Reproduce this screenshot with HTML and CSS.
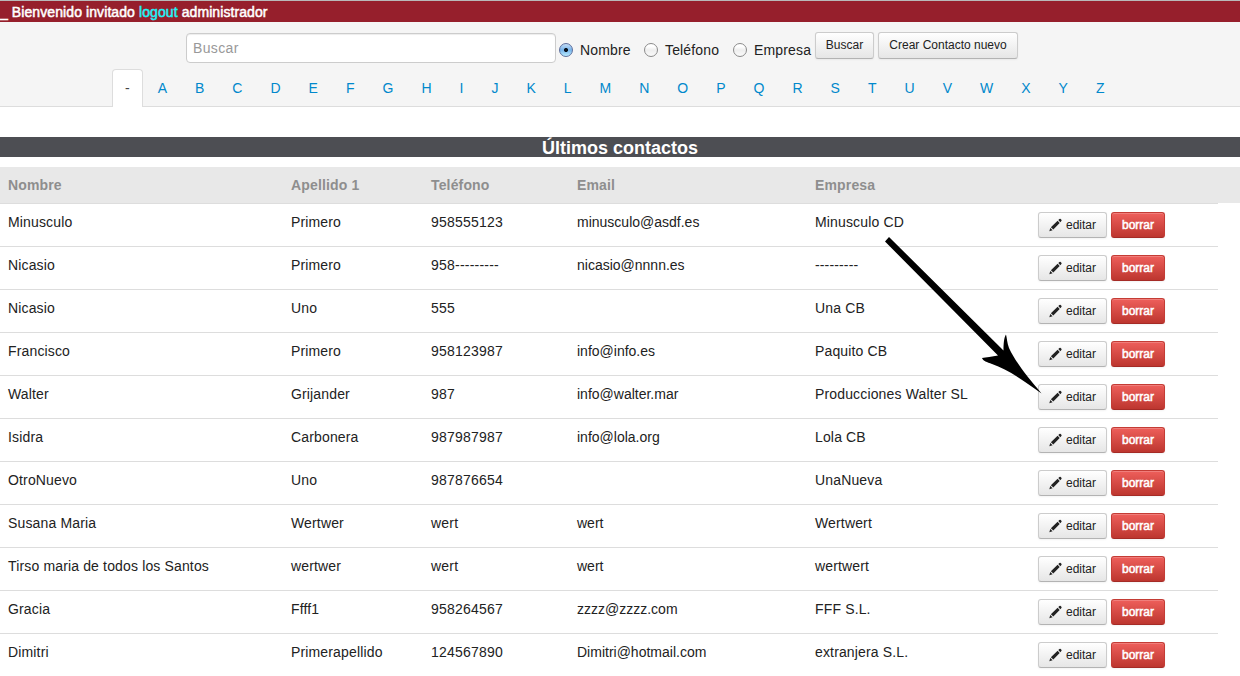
FILE: index.html
```html
<!DOCTYPE html>
<html lang="es">
<head>
<meta charset="utf-8">
<title>Contactos</title>
<link rel="stylesheet" href="styles.css">
</head>
<body>
<div class="userbar">_ Bienvenido invitado <a class="logout">logout</a> administrador</div>
<header class="header">
  <form class="search">
    <input class="search-input" type="text" placeholder="Buscar">
    <label class="option option-name"><span class="radio radio-on"></span><span>Nombre</span></label>
    <label class="option option-phone"><span class="radio"></span><span>Teléfono</span></label>
    <label class="option option-company"><span class="radio"></span><span>Empresa</span></label>
    <a class="btn btn-search">Buscar</a>
    <a class="btn btn-create">Crear Contacto nuevo</a>
  </form>
  <nav class="tabs" id="tabs"><a class="tab tab-active">-</a></nav>
</header>
<h4 class="title"><span>Últimos contactos</span></h4>
<main class="list">
  <table class="contacts">
    <colgroup><col class="c-name"><col class="c-last"><col class="c-phone"><col class="c-email"><col class="c-company"><col class="c-actions"></colgroup>
    <thead><tr><th>Nombre</th><th>Apellido 1</th><th>Teléfono</th><th>Email</th><th>Empresa</th><th></th></tr></thead>
    <tbody id="rows"></tbody>
  </table>
</main>
<svg class="arrow" width="160" height="160" viewBox="0 0 160 160">
  <path d="M9 0 L5 4.500 L118 118.500 C112 119.500 106 120.500 102 121 C103 124 107 125 112 127 C127 132 143 143 161.500 156.500 C147 139 136 126 129 111 C127 106 127 101 126 97.500 C124 100 123.500 107 123.500 113.500 Z"/>
</svg>
<script src="app.js"></script>
</body>
</html>
```
FILE: styles.css
```css
body {
  margin: 0;
  height: 676px;
  overflow: hidden;
  position: relative;
  background: #fff;
  color: #222;
  font: 14px/20px "Liberation Sans", Arial, sans-serif;
}

.userbar {
  height: 20px;
  box-sizing: content-box;
  border-top: 1px solid #b9b9b9;
  padding-top: 1px;
  background: #961f2c;
  color: #fff;
  line-height: 21px;
  letter-spacing: .09px;
  -webkit-text-stroke: 0.5px;
}
.logout { color: #1ff4f8; }

.header {
  height: 84px;
  background: #f5f5f5;
  border-bottom: 1px solid #ddd;
}
.search {
  display: flex;
  align-items: flex-start;
  height: 47px;
  padding-left: 186px;
}
.search-input {
  box-sizing: border-box;
  width: 370px;
  height: 30px;
  margin: 11px 3px 0 0;
  padding: 4px 6px;
  border: 1px solid #ccc;
  border-radius: 4px;
  background: #fff;
  box-shadow: inset 0 1px 1px rgba(0, 0, 0, .075);
  font: inherit;
  letter-spacing: .35px;
}
.search-input::placeholder { color: #999; opacity: 1; }
.option {
  display: flex;
  align-items: center;
  gap: 7px;
  margin-top: 18px;
  white-space: nowrap;
  letter-spacing: .15px;
}
.option-name { width: 85px; }
.option-phone { width: 89px; }
.option-company { width: 82px; }
.radio {
  flex: none;
  box-sizing: border-box;
  width: 14px;
  height: 14px;
  border: 1px solid #8b8b8b;
  border-radius: 50%;
  background: linear-gradient(#fff 20%, #eee 50%, #fafafa);
}
.radio-on {
  border-color: #5d6f9d;
  background: radial-gradient(circle at 50% 50%, #08111d 1.6px, transparent 2.4px), linear-gradient(#c4dcf5, #76b3ea 50%, #b8ecff);
}

.btn {
  box-sizing: border-box;
  display: flex;
  align-items: center;
  justify-content: center;
  height: 27px;
  border: 1px solid #ccc;
  border-bottom-color: #b3b3b3;
  border-radius: 3px;
  background: linear-gradient(#fff, #e6e6e6);
  box-shadow: inset 0 1px 0 rgba(255, 255, 255, .2), 0 1px 2px rgba(0, 0, 0, .05);
  color: #222;
  font-size: 12px;
  white-space: nowrap;
}
.search .btn { margin-top: 10px; padding-bottom: 1px; }
.btn-search { width: 59px; margin-right: 4px; }
.btn-create { width: 140px; }

.tabs {
  display: flex;
  gap: 2px;
  padding-left: 112px;
}
.tab {
  height: 20px;
  padding: 8px 12px;
  border: 1px solid transparent;
  border-bottom: 0;
  border-radius: 4px 4px 0 0;
  color: #08c;
}
.tab-active {
  padding-bottom: 9px;
  border-color: #ddd;
  background: #fff;
  color: #444;
}

.title {
  height: 20px;
  margin: 30px 0 10px;
  background: #4d4e53;
  color: #fff;
  font-size: 18px;
  line-height: 22px;
  text-align: center;
  letter-spacing: 0;
}

.list { background: linear-gradient(#e8e8e8, #e8e8e8) 0 0 / 100% 36px no-repeat; }
.contacts {
  width: 1218px;
  table-layout: fixed;
  border-collapse: separate;
  border-spacing: 0;
}
.c-name { width: 283px; }
.c-last { width: 140px; }
.c-phone { width: 146px; }
.c-email { width: 238px; }
.c-company { width: 223px; }
.contacts th {
  height: 20px;
  padding: 8px;
  color: #8e8e8e;
  text-align: left;
  letter-spacing: .15px;
}
.contacts td {
  height: 26px;
  padding: 8px;
  border-top: 1px solid #ddd;
  vertical-align: top;
  white-space: nowrap;
  letter-spacing: .15px;
}
.contacts td:nth-child(3) { letter-spacing: .22px; }
.contacts td:nth-child(4) { letter-spacing: 0; }
.actions { display: flex; gap: 4px; height: 26px; letter-spacing: 0; }
.actions .btn { height: 26px; padding-bottom: 1px; }
.btn-edit { width: 69px; gap: 4px; }
.btn-delete {
  width: 54px;
  border-color: #c43c35 #c43c35 #a52b26;
  background: linear-gradient(#ee5f5b, #bd362f);
  color: #fff;
  -webkit-text-stroke: .5px;
}
.pencil { width: 13px; height: 14px; fill: #222; }

.arrow {
  position: absolute;
  left: 880px;
  top: 237px;
  overflow: visible;
}
```
FILE: app.js
```js
const tabs = document.getElementById('tabs');
for (const letter of 'ABCDEFGHIJKLMNOPQRSTUVWXYZ') {
  const a = document.createElement('a');
  a.className = 'tab';
  a.textContent = letter;
  tabs.append(a);
}

const contacts = [
  ['Minusculo', 'Primero', '958555123', 'minusculo@asdf.es', 'Minusculo CD'],
  ['Nicasio', 'Primero', '958---------', 'nicasio@nnnn.es', '---------'],
  ['Nicasio', 'Uno', '555', '', 'Una CB'],
  ['Francisco', 'Primero', '958123987', 'info@info.es', 'Paquito CB'],
  ['Walter', 'Grijander', '987', 'info@walter.mar', 'Producciones Walter SL'],
  ['Isidra', 'Carbonera', '987987987', 'info@lola.org', 'Lola CB'],
  ['OtroNuevo', 'Uno', '987876654', '', 'UnaNueva'],
  ['Susana Maria', 'Wertwer', 'wert', 'wert', 'Wertwert'],
  ['Tirso maria de todos los Santos', 'wertwer', 'wert', 'wert', 'wertwert'],
  ['Gracia', 'Ffff1', '958264567', 'zzzz@zzzz.com', 'FFF S.L.'],
  ['Dimitri', 'Primerapellido', '124567890', 'Dimitri@hotmail.com', 'extranjera S.L.']
];
const actions = `<td><div class="actions"><a class="btn btn-edit"><svg class="pencil" viewBox="0 0 13 14"><path d="M0.300 13.200 L1.300 9.900 L3.600 12.200 Z M1.900 9.200 L8.600 2.800 L10.700 4.900 L4.300 11.500 Z M9.300 2.100 L10.400 1.100 Q11.100 0.600 11.700 1.100 L12.400 1.800 Q12.900 2.500 12.400 3.100 L11.300 4.200 Z"/></svg>editar</a><a class="btn btn-delete">borrar</a></div></td>`;
document.getElementById('rows').innerHTML = contacts
  .map(row => '<tr>' + row.map(value => `<td>${value}</td>`).join('') + actions + '</tr>')
  .join('');
```
